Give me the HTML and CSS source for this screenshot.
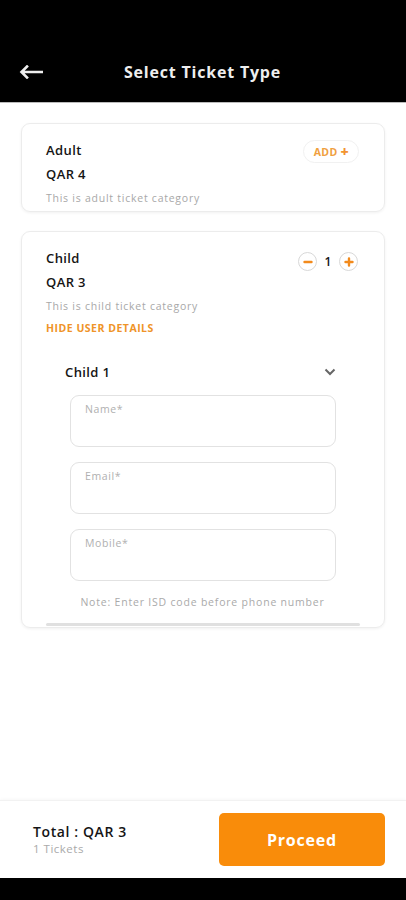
FILE: index.html
```html
<!DOCTYPE html>
<html>
<head>
<meta charset="utf-8">
<link rel="stylesheet" href="styles.css">
</head>
<body>
<div class="app">
  <header class="topbar">
    <svg class="back" width="24" height="14" viewBox="0 0 24 14"><path d="M23 7H3M8 1.5L2.5 7L8 12.5" fill="none" stroke="#eee" stroke-width="2.6" stroke-linecap="square"/></svg>
    <div class="title">Select Ticket Type</div>
  </header>
  <main class="content">
    <section class="card">
      <div class="row">
        <div class="info">
          <div class="name">Adult</div>
          <div class="price">QAR 4</div>
          <div class="desc">This is adult ticket category</div>
        </div>
        <div class="add">ADD <span class="plus">+</span></div>
      </div>
    </section>
    <section class="card card-child">
      <div class="row">
        <div class="info">
          <div class="name">Child</div>
          <div class="price">QAR 3</div>
          <div class="desc">This is child ticket category</div>
          <div class="toggle">HIDE USER DETAILS</div>
        </div>
        <div class="counter">
          <span class="circ"><svg width="10" height="10" viewBox="0 0 10 10"><path d="M1.5 5h7" stroke="#f28a1c" stroke-width="2.4" stroke-linecap="round"/></svg></span>
          <span class="qty">1</span>
          <span class="circ"><svg width="10" height="10" viewBox="0 0 10 10"><path d="M1.5 5h7M5 1.5v7" stroke="#f28a1c" stroke-width="2.4" stroke-linecap="round"/></svg></span>
        </div>
      </div>
      <div class="person">
        <div class="person-head">
          <span>Child 1</span>
          <svg width="12" height="8" viewBox="0 0 12 8"><path d="M1.5 1.5L6 6L10.5 1.5" fill="none" stroke="#666" stroke-width="2"/></svg>
        </div>
        <div class="fields">
          <div class="field">Name*</div>
          <div class="field">Email*</div>
          <div class="field">Mobile*</div>
        </div>
        <div class="note">Note: Enter ISD code before phone number</div>
      </div>
      <div class="scrollline"></div>
    </section>
  </main>
  <footer class="bottombar">
    <div class="total">
      <div class="total-label">Total : QAR 3</div>
      <div class="total-count">1 Tickets</div>
    </div>
    <button class="proceed">Proceed</button>
  </footer>
  <div class="navbar"></div>
</div>
</body>
</html>
```
FILE: styles.css
```css
* { box-sizing: border-box; }
html, body { margin: 0; padding: 0; }
body {
  font-family: "Open Sans", "Liberation Sans", sans-serif;
  color: #151515;
  background: #fff;
}
.app {
  width: 406px;
  height: 900px;
  display: flex;
  flex-direction: column;
}
.topbar {
  height: 103px;
  background: #000;
  border-bottom: 1px solid #bbb;
  display: flex;
  align-items: center;
  padding: 42px 20px 0 19px;
}
.back { display: block; }
.title {
  flex: 1;
  text-align: center;
  color: #eee;
  font-size: 16px;
  font-weight: 700;
  margin-right: 24px;
  letter-spacing: 0.8px;
}
.content {
  flex: 1;
  padding: 20px 21px 0;
  display: flex;
  flex-direction: column;
  gap: 19px;
}
.card {
  border: 1px solid #ececec;
  border-radius: 9px;
  box-shadow: 0 1px 3px rgba(0,0,0,0.06);
  padding: 14px 24px 1px 24px;
}
.row {
  display: flex;
  justify-content: space-between;
  align-items: flex-start;
}
.name, .price {
  font-size: 13px;
  font-weight: 600;
  line-height: 24px;
  letter-spacing: 0.4px;
}
.desc {
  font-size: 10.5px;
  color: #a8a8a8;
  line-height: 24px;
  letter-spacing: 0.75px;
}
.toggle {
  font-size: 10.5px;
  font-weight: 700;
  color: #ef9428;
  line-height: 20px;
  letter-spacing: 0.5px;
}
.add {
  margin-top: 2px;
  margin-right: 1px;
  height: 23px;
  padding: 0 9px 0 10px;
  border: 1px solid #f1f1f1;
  border-radius: 12px;
  font-size: 10.5px;
  font-weight: 700;
  color: #f0a040;
  display: flex;
  align-items: center;
  gap: 3px;
  letter-spacing: 0.3px;
}
.plus { font-size: 14px; font-weight: 800; color: #f29430; }
.counter {
  margin-top: 6px;
  margin-right: 2px;
  display: flex;
  align-items: center;
  gap: 4px;
}
.circ {
  width: 19px;
  height: 19px;
  border: 1px solid #d8d8d8;
  border-radius: 50%;
  display: flex;
  align-items: center;
  justify-content: center;
}
.qty { font-size: 12px; font-weight: 600; width: 14px; text-align: center; }
.person { padding: 22px 20px 0 19px; }
.person-head {
  display: flex;
  justify-content: space-between;
  align-items: center;
  font-size: 13px;
  font-weight: 600;
  height: 24px;
  padding-right: 4px;
  letter-spacing: 0.4px;
}
.fields {
  margin-top: 11px;
  padding: 0 4px 0 5px;
  display: flex;
  flex-direction: column;
  gap: 15px;
}
.field {
  height: 52px;
  border: 1px solid #e2e2e2;
  border-radius: 9px;
  padding: 6px 14px;
  font-size: 10.5px;
  color: #b0b0b0;
  letter-spacing: 0.6px;
}
.note {
  text-align: center;
  font-size: 10.5px;
  color: #aaa;
  margin-top: 13px;
  line-height: 16px;
  letter-spacing: 0.8px;
}
.scrollline {
  margin: 13px 0 0 0;
  height: 3px;
  background: #e0e0e0;
  border-radius: 2px;
}
.bottombar {
  height: 78px;
  border-top: 1px solid #f2f2f2;
  box-shadow: 0 -1px 3px rgba(0,0,0,0.03);
  display: flex;
  align-items: center;
  justify-content: space-between;
  padding: 0 21px 0 33px;
}
.total-label { font-size: 14px; font-weight: 600; line-height: 18px; letter-spacing: 0.6px; }
.total-count { font-size: 11.5px; color: #aaa; line-height: 16px; letter-spacing: 0.5px; }
.proceed {
  width: 166px;
  height: 53px;
  border: none;
  border-radius: 5px;
  background: #f98c0a;
  color: #fff;
  font-family: inherit;
  font-size: 16px;
  font-weight: 700;
  letter-spacing: 0.8px;
}
.navbar { height: 22px; background: #000; }
```
